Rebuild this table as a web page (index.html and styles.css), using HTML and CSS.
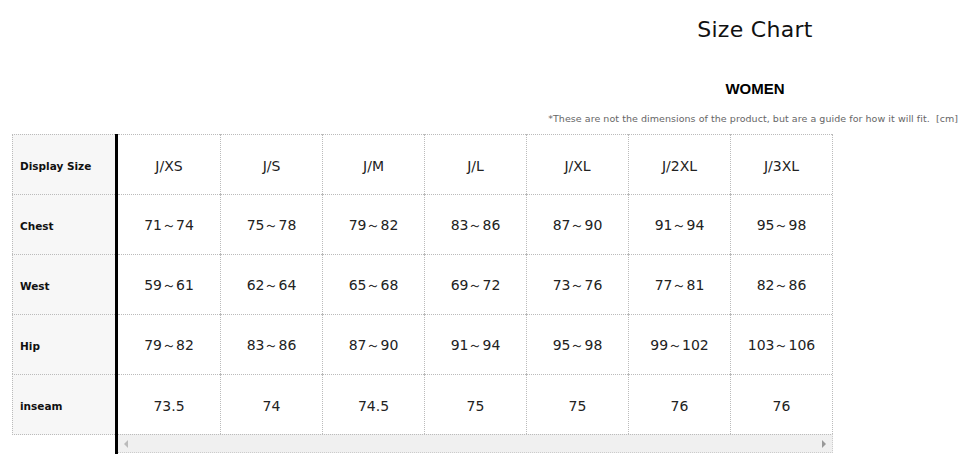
FILE: index.html
```html
<!DOCTYPE html>
<html>
<head>
<meta charset="utf-8">
<link rel="stylesheet" href="styles.css">
</head>
<body>
<div class="page">
  <div class="head">
    <h1 class="title">Size Chart</h1>
    <h2 class="group">WOMEN</h2>
  </div>
  <p class="note">*These are not the dimensions of the product, but are a guide for how it will fit.&nbsp; [cm]</p>
  <div class="chart">
    <div class="labels">
      <div class="lab">Display Size</div>
      <div class="lab">Chest</div>
      <div class="lab">West</div>
      <div class="lab">Hip</div>
      <div class="lab">inseam</div>
    </div>
    <div class="scroll">
      <div class="grid">
        <div class="c">J/XS</div><div class="c">J/S</div><div class="c">J/M</div><div class="c">J/L</div><div class="c">J/XL</div><div class="c">J/2XL</div><div class="c">J/3XL</div>
        <div class="c">71～74</div><div class="c">75～78</div><div class="c">79～82</div><div class="c">83～86</div><div class="c">87～90</div><div class="c">91～94</div><div class="c">95～98</div>
        <div class="c">59～61</div><div class="c">62～64</div><div class="c">65～68</div><div class="c">69～72</div><div class="c">73～76</div><div class="c">77～81</div><div class="c">82～86</div>
        <div class="c">79～82</div><div class="c">83～86</div><div class="c">87～90</div><div class="c">91～94</div><div class="c">95～98</div><div class="c">99～102</div><div class="c">103～106</div>
        <div class="c">73.5</div><div class="c">74</div><div class="c">74.5</div><div class="c">75</div><div class="c">75</div><div class="c">76</div><div class="c">76</div>
      </div>
      <div class="bar">
        <span class="arr left"></span>
        <span class="arr right"></span>
      </div>
    </div>
  </div>
</div>
</body>
</html>
```
FILE: styles.css
```css
html, body {
  margin: 0;
  padding: 0;
  background: #fff;
}
body {
  font-family: "DejaVu Sans", sans-serif;
  color: #222;
}
.page {
  width: 968px;
  height: 464px;
  overflow: hidden;
}
.head {
  width: 400px;
  margin-left: 555px;
  text-align: center;
}
.title {
  margin: 0;
  padding-top: 15px;
  font-family: "DejaVu Sans", sans-serif;
  font-weight: normal;
  font-size: 22px;
  line-height: 30px;
  color: #111;
  letter-spacing: 0.3px;
}
.group {
  margin: 0;
  padding-top: 34px;
  font-family: "Liberation Sans", sans-serif;
  font-weight: bold;
  font-size: 15px;
  line-height: 20px;
  color: #000;
}
.note {
  margin: 14px 0 0;
  padding-right: 10px;
  text-align: right;
  font-family: "DejaVu Sans", sans-serif;
  font-size: 9.5px;
  line-height: 12px;
  color: #666;
  letter-spacing: 0.05px;
}
.chart {
  display: flex;
  margin-top: 9px;
  margin-left: 12px;
}
.labels {
  width: 103px;
  border-right: 3px solid #000;
  padding-bottom: 19px;
  display: flex;
  flex-direction: column;
}
.lab {
  height: 59px;
  box-sizing: content-box;
  background: #f7f7f7;
  border-left: 1px dotted #bbb;
  border-top: 1px dotted #bbb;
  display: flex;
  align-items: center;
  padding-left: 7px;
  padding-top: 3px;
  height: 56px;
  font-family: "DejaVu Sans", sans-serif;
  font-weight: bold;
  font-size: 10.5px;
  color: #111;
}
.lab:last-child {
  border-bottom: 1px dotted #bbb;
}
.scroll {
  width: 715px;
}
.grid {
  display: grid;
  grid-template-columns: repeat(7, 102px);
  grid-auto-rows: 60px;
  border-right: 1px dotted #bbb;
}
.c {
  border-top: 1px dotted #bbb;
  border-left: 1px dotted #bbb;
  display: flex;
  align-items: center;
  justify-content: center;
  padding-top: 3px;
  font-family: "DejaVu Sans", sans-serif;
  font-size: 14px;
  color: #222;
}
.c:nth-child(7n+1) {
  border-left: none;
}
.bar {
  height: 17px;
  background: #f0f0f0;
  border-top: 1px dotted #bbb;
  border-bottom: 1px dotted #ccc;
  border-right: 1px dotted #ccc;
  display: flex;
  align-items: center;
  justify-content: space-between;
  padding: 0 6px;
}
.arr {
  width: 0;
  height: 0;
  border-top: 4px solid transparent;
  border-bottom: 4px solid transparent;
}
.arr.left {
  border-right: 4px solid #bbb;
}
.arr.right {
  border-left: 4px solid #999;
}
```
